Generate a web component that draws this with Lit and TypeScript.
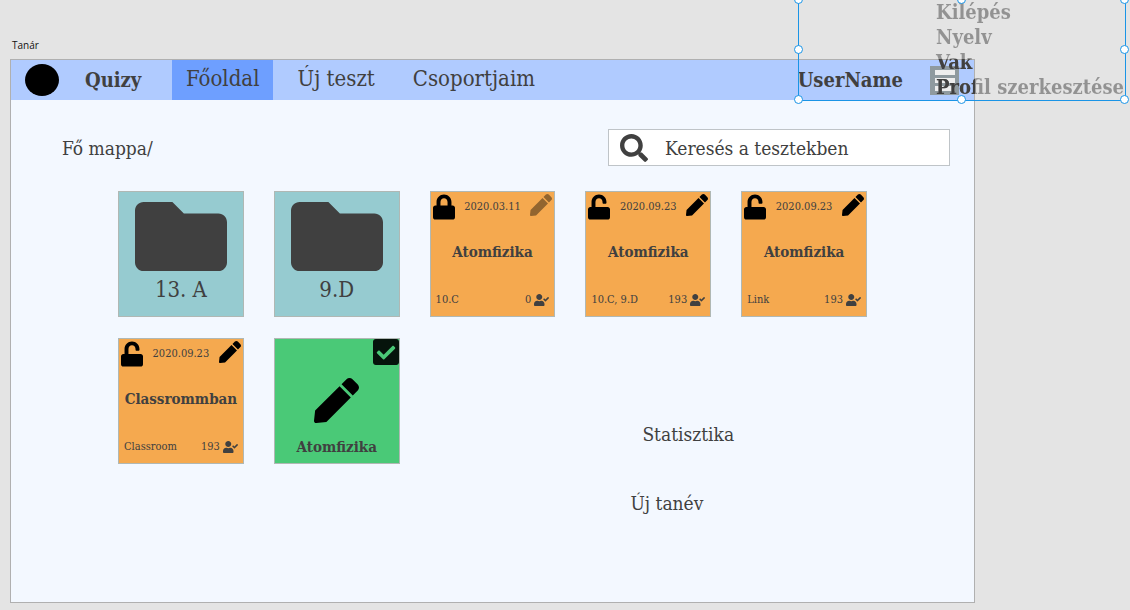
import { LitElement, html, css, svg } from "lit";
import { customElement, state } from "lit/decorators.js";
import { classMap } from "lit/directives/class-map.js";

const icons = {
  lock: { box: "0 0 448 512", d: "M400 224h-24v-72C376 68.2 307.8 0 224 0S72 68.2 72 152v72H48c-26.5 0-48 21.5-48 48v192c0 26.5 21.5 48 48 48h352c26.5 0 48-21.5 48-48V272c0-26.5-21.5-48-48-48zm-104 0H152v-72c0-39.7 32.3-72 72-72s72 32.3 72 72v72z" },
  unlock: { box: "0 0 448 512", d: "M400 256H152V152.9c0-39.6 31.7-72.5 71.3-72.9 40-.4 72.7 32.1 72.7 72v16c0 13.3 10.7 24 24 24h32c13.3 0 24-10.7 24-24v-16C376 68 307.5-.3 223.5 0 139.5.3 72 69.5 72 153.5V256H48c-26.5 0-48 21.5-48 48v160c0 26.5 21.5 48 48 48h352c26.5 0 48-21.5 48-48V304c0-26.5-21.5-48-48-48z" },
  pen: { box: "0 0 512 512", d: "M290.74 93.24l128.02 128.02-277.99 277.99-114.14 12.6C11.35 513.54-1.56 500.62.14 485.34l12.7-114.22 277.9-277.88zm207.2-19.06l-60.11-60.11c-18.75-18.75-49.16-18.75-67.91 0l-56.55 56.55 128.02 128.02 56.55-56.55c18.75-18.76 18.75-49.16 0-67.91z" },
  users: { box: "0 0 640 512", d: "M224 256c70.7 0 128-57.3 128-128S294.7 0 224 0 96 57.3 96 128s57.3 128 128 128zm89.6 32h-16.7c-22.2 10.2-46.9 16-72.9 16s-50.6-5.8-72.9-16h-16.7C60.2 288 0 348.2 0 422.4V464c0 26.5 21.5 48 48 48h352c26.5 0 48-21.5 48-48v-41.6c0-74.2-60.2-134.4-134.4-134.4zM636.6 159.7l-27.8-28.1c-4.6-4.7-12.1-4.7-16.8-.1l-104.8 104-45.5-45.8c-4.6-4.7-12.1-4.7-16.8-.1l-28.1 27.9c-4.7 4.6-4.7 12.1-.1 16.8l81.7 82.3c4.6 4.7 12.1 4.7 16.8.1l141.3-140.2c4.6-4.7 4.7-12.2.1-16.8z" },
  check: { box: "0 32 448 448", d: "M400 480H48c-26.51 0-48-21.49-48-48V80c0-26.51 21.49-48 48-48h352c26.51 0 48 21.49 48 48v352c0 26.51-21.49 48-48 48zm-204.686-98.059l184-184c6.248-6.248 6.248-16.379 0-22.627l-22.627-22.627c-6.248-6.248-16.379-6.249-22.628 0L184 302.745l-70.059-70.059c-6.248-6.248-16.379-6.248-22.628 0l-22.627 22.627c-6.248 6.248-6.248 16.379 0 22.627l104 104c6.249 6.25 16.379 6.25 22.628.001z" },
  search: { box: "0 0 512 512", d: "M505 442.7L405.3 343c-4.5-4.5-10.6-7-17-7H372c27.6-35.3 44-79.7 44-128C416 93.1 322.9 0 208 0S0 93.1 0 208s93.1 208 208 208c48.3 0 92.7-16.4 128-44v16.3c0 6.4 2.5 12.5 7 17l99.7 99.7c9.4 9.4 24.6 9.4 33.9 0l28.3-28.3c9.4-9.4 9.4-24.6.1-34zM208 336c-70.7 0-128-57.2-128-128 0-70.7 57.2-128 128-128 70.7 0 128 57.2 128 128 0 70.7-57.2 128-128 128z" },
  folder: { box: "0 64 512 384", d: "M464 128H272l-64-64H48C21.49 64 0 85.49 0 112v288c0 26.51 21.49 48 48 48h416c26.51 0 48-21.49 48-48V176c0-26.51-21.49-48-48-48z" },
};

const icon = (name: keyof typeof icons, cls: string) => html`
  <svg class=${cls} viewBox=${icons[name].box} fill="currentColor" aria-hidden="true">
    ${svg`<path d=${icons[name].d}></path>`}
  </svg>`;

interface Quiz {
  title: string;
  date: string;
  target: string;
  filled: number;
  open: boolean;
}

const folders = ["13. A", "9.D"];

const quizzes: Quiz[] = [
  { title: "Atomfizika", date: "2020.03.11", target: "10.C", filled: 0, open: false },
  { title: "Atomfizika", date: "2020.09.23", target: "10.C, 9.D", filled: 193, open: true },
  { title: "Atomfizika", date: "2020.09.23", target: "Link", filled: 193, open: true },
  { title: "Classrommban", date: "2020.09.23", target: "Classroom", filled: 193, open: true },
];

const handles = ["nw", "n", "ne", "w", "e", "sw", "s", "se"];

@customElement("app-root")
export class AppRoot extends LitElement {
  @state() private tab = "Főoldal";

  static styles = css`
    :host {
      display: flex;
      flex-direction: column;
      box-sizing: border-box;
      min-height: 100vh;
      position: relative;
      overflow: hidden;
      padding: 38px 155px 7px 10px;
      background: #e4e4e4;
      color: #404040;
      font-family: "DejaVu Serif Condensed", "DejaVu Serif", serif;
    }
    * { box-sizing: border-box; }
    svg { display: block; flex: none; }
    button, input { font: inherit; color: inherit; border: 0; background: none; padding: 0; margin: 0; }
    button { cursor: pointer; }
    a { color: inherit; text-decoration: none; }

    .board-name {
      padding-left: 2px;
      font: 10px/14px "Open Sans", sans-serif;
      color: #111;
      margin-bottom: 7px;
    }
    .board {
      flex: 1;
      border: 1px solid #b0b0b0;
      background: #f3f8ff;
    }
    .bar {
      display: flex;
      align-items: center;
      height: 40px;
      background: #b0cbff;
      font-size: 20px;
      line-height: 24px;
    }
    .avatar { width: 34px; height: 32px; margin: 0 26px 0 14px; border-radius: 50%; background: #000; }
    .brand { width: 87px; font-weight: bold; }
    .tabs { display: flex; flex: 1; align-self: stretch; font-size: 22px; }
    .tab { display: flex; align-items: center; padding: 0 14px 2px; margin-right: 10px; white-space: nowrap; }
    .tab.current { background: #6e9fff; }
    .user { font-weight: bold; margin-right: 27px; }
    .menu-button { width: 29px; height: 29px; margin-right: 15px; }
    .menu-icon { width: 29px; height: 29px; }

    .tools {
      display: flex;
      align-items: center;
      justify-content: space-between;
      padding: 29px 24px 0 51px;
      font-size: 19px;
      line-height: 24px;
    }
    .search {
      display: flex;
      align-items: center;
      gap: 17px;
      width: 342px;
      height: 37px;
      padding: 0 11px;
      border: 1px solid #bfc4c8;
      background: #fff;
    }
    .search-icon { width: 28px; height: 28px; }
    .search-text { flex: 1; min-width: 0; height: 24px; outline: none; }
    .search-text::placeholder { color: inherit; opacity: 1; }

    .grid {
      display: grid;
      grid-template-columns: repeat(5, 1fr);
      gap: 21px 30px;
      padding: 25px 107px 24px;
    }
    .card { aspect-ratio: 1; border: 1px solid #b0b8b4; min-width: 0; }
    .folder {
      display: flex;
      flex-direction: column;
      align-items: center;
      gap: 7px;
      padding-top: 10px;
      background: #96cbd0;
      font-size: 22px;
      line-height: 24px;
    }
    .folder-icon { width: 92px; height: 69px; }
    .quiz {
      display: flex;
      flex-direction: column;
      justify-content: space-between;
      padding: 2px;
      background: #f5a94f;
      font-size: 11px;
      line-height: 14px;
    }
    .quiz-top, .quiz-bottom { display: flex; align-items: center; justify-content: space-between; }
    .quiz-bottom { padding: 0 3px 7px; }
    .quiz-title { font-size: 15px; line-height: 20px; font-weight: bold; text-align: center; }
    .quiz .quiz-title { margin-bottom: 8px; }
    .lock-icon { width: 22px; height: 26px; color: #000; }
    .edit { align-self: flex-start; }
    .edit-icon { width: 22px; height: 22px; color: #000; }
    .edit:disabled { opacity: 0.4; }
    .count { display: flex; align-items: center; gap: 3px; }
    .users-icon { width: 15px; height: 12px; }
    .draft {
      display: grid;
      grid-template-rows: 26px 1fr auto;
      justify-items: center;
      align-items: center;
      padding-bottom: 6px;
      background: #4ac977;
    }
    .check-icon { width: 26px; height: 26px; color: #06140c; justify-self: end; }
    .draft-icon { width: 45px; height: 45px; color: #000; }
    .link { grid-column: 4 / span 2; font-size: 19px; line-height: 24px; }
    .stats { grid-row: 2; align-self: end; padding: 0 0 18px 57px; }
    .year { grid-row: 3; padding: 6px 0 0 45px; }

    .menu {
      position: absolute;
      top: 0;
      right: 4px;
      width: 328px;
      height: 101px;
      border: 1px solid #1a94e6;
      border-top: 0;
      pointer-events: none;
    }
    /* Lettering is dark where it lies over the board and faded off its edge. */
    .menu-list {
      list-style: none;
      margin: 0;
      padding: 0 0 0 137px;
      font-size: 20px;
      line-height: 25px;
      font-weight: bold;
      color: transparent;
      background: linear-gradient(#404040, #404040) 0 59px / 176px 42px no-repeat, #929292;
      -webkit-background-clip: text;
      background-clip: text;
      white-space: nowrap;
    }
    .handle {
      position: absolute;
      width: 9px;
      height: 9px;
      margin: -5px;
      border: 1px solid #1a94e6;
      border-radius: 50%;
      background: #fff;
    }
    .nw, .n, .ne { top: 0; }
    .w, .e { top: 50%; }
    .sw, .s, .se { top: 100%; }
    .nw, .w, .sw { left: 0; }
    .n, .s { left: 50%; }
    .ne, .e, .se { left: 100%; }
  `;

  private quizCard(q: Quiz) {
    return html`
      <article class="card quiz">
        <div class="quiz-top">
          ${icon(q.open ? "unlock" : "lock", "lock-icon")}
          <time>${q.date}</time>
          <button class="edit" aria-label="Szerkesztés" ?disabled=${!q.open}>${icon("pen", "edit-icon")}</button>
        </div>
        <div class="quiz-title">${q.title}</div>
        <div class="quiz-bottom">
          <span>${q.target}</span>
          <span class="count">${q.filled} ${icon("users", "users-icon")}</span>
        </div>
      </article>`;
  }

  render() {
    return html`
      <div class="board-name">Tanár</div>
      <main class="board">
        <header class="bar">
          <span class="avatar"></span>
          <span class="brand">Quizy</span>
          <nav class="tabs">
            ${["Főoldal", "Új teszt", "Csoportjaim"].map(
              (t) => html`<a href="#" class=${classMap({ tab: true, current: t === this.tab })}
                @click=${(e: Event) => { e.preventDefault(); this.tab = t; }}>${t}</a>`
            )}
          </nav>
          <span class="user">UserName</span>
          <button class="menu-button" aria-label="Menü">
            <svg class="menu-icon" viewBox="0 0 29 29" aria-hidden="true">
              <path fill="#8f9a9f" d="M0 0h29v29H0z"></path>
              <path fill="#eee" d="M5 4h20v5H5zM5 12h20v5H5zM5 20h20v5H5z"></path>
            </svg>
          </button>
        </header>
        <div class="tools">
          <span>Fő mappa/</span>
          <label class="search">
            ${icon("search", "search-icon")}
            <input class="search-text" type="text" placeholder="Keresés a tesztekben" aria-label="Keresés a tesztekben" />
          </label>
        </div>
        <section class="grid">
          ${folders.map((f) => html`<a href="#" class="card folder">${icon("folder", "folder-icon")}<span>${f}</span></a>`)}
          ${quizzes.map((q) => this.quizCard(q))}
          <article class="card draft">
            ${icon("check", "check-icon")} ${icon("pen", "draft-icon")}
            <div class="quiz-title">Atomfizika</div>
          </article>
          <a href="#" class="link stats">Statisztika</a>
          <a href="#" class="link year">Új tanév</a>
        </section>
      </main>
      <div class="menu">
        <ul class="menu-list">
          <li>Kilépés</li>
          <li>Nyelv</li>
          <li>Vak</li>
          <li>Profil szerkesztése</li>
        </ul>
        ${handles.map((h) => html`<span class="handle ${h}"></span>`)}
      </div>
    `;
  }
}
